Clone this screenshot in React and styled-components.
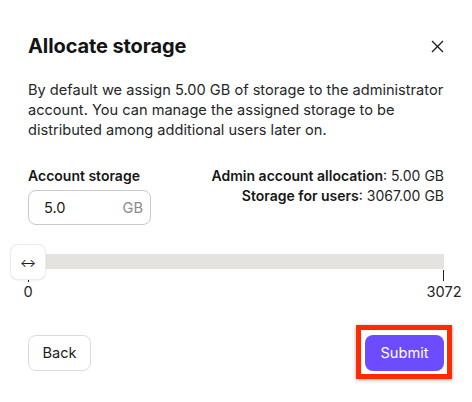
import React from "react";
import styled, { createGlobalStyle } from "styled-components";

const Global = createGlobalStyle`
  html, body { margin: 0; padding: 0; background: #ffffff; }
  body { font-family: Inter, "Noto Sans", "Liberation Sans", sans-serif; color: #1c1c1c; }
  * { box-sizing: border-box; }
`;

const Dialog = styled.div`
  width: 472px;
  height: 402px;
  padding: 32px 28px 0 28px;
  display: flex;
  flex-direction: column;
  background: #fff;
`;

const Header = styled.div`
  display: flex;
  align-items: center;
  justify-content: space-between;
  height: 28px;
`;

const Title = styled.h2`
  margin: 0;
  font-size: 20px;
  font-weight: 700;
  letter-spacing: -0.1px;
  color: #141414;
`;

const CloseButton = styled.button`
  border: 0;
  background: none;
  padding: 0;
  width: 16px;
  height: 16px;
  display: flex;
  align-items: center;
  justify-content: center;
  margin-right: -1px;
  cursor: pointer;
`;

const Description = styled.p`
  margin: 20px 0 0 0;
  font-size: 14.6px;
  line-height: 20px;
  color: #262626;
`;

const StatsRow = styled.div`
  display: flex;
  justify-content: space-between;
  margin-top: 26px;
`;

const Field = styled.div`
  display: flex;
  flex-direction: column;
  gap: 4px;
`;

const Label = styled.div`
  font-size: 14px;
  font-weight: 600;
  line-height: 20px;
  color: #171717;
`;

const InputBox = styled.div`
  width: 123px;
  height: 35px;
  border: 1px solid #c9c9c9;
  border-radius: 8px;
  display: flex;
  align-items: center;
  justify-content: space-between;
  padding: 0 7px 0 15px;
  font-size: 14.6px;
`;

const InputValue = styled.span`
  color: #1c1c1c;
`;

const Unit = styled.span`
  color: #8a8a8a;
`;

const Stats = styled.div`
  display: flex;
  flex-direction: column;
  align-items: flex-end;
  font-size: 14px;
  line-height: 20px;
  color: #262626;
`;

const StatKey = styled.b`
  font-weight: 600;
  color: #171717;
`;

const SliderArea = styled.div`
  margin-top: 20px;
  position: relative;
  height: 60px;
`;

const Track = styled.div`
  position: absolute;
  left: 0;
  right: 0;
  top: 9px;
  height: 15px;
  background: #e5e3df;
`;

const Thumb = styled.div`
  position: absolute;
  left: -17px;
  top: 0;
  width: 34px;
  height: 34px;
  background: #fff;
  border-radius: 7px;
  box-shadow: 0 0 0 1px #ececec, 0 1px 3px rgba(0, 0, 0, 0.12);
  display: flex;
  align-items: center;
  justify-content: center;
  font-size: 12px;
  color: #1a1a1a;
`;

const Tick = styled.div`
  position: absolute;
  top: ${(p) => p.$top}px;
  left: ${(p) => (p.$end ? "auto" : "0")};
  right: ${(p) => (p.$end ? "0" : "auto")};
  width: 1px;
  height: ${(p) => p.$h}px;
  background: #222;
`;

const TickLabel = styled.span`
  position: absolute;
  top: 38px;
  font-size: 14.6px;
  line-height: 18px;
  color: #262626;
  transform: translateX(-50%);
  left: ${(p) => p.$left};
`;

const Footer = styled.div`
  margin-top: 30px;
  display: flex;
  justify-content: space-between;
  align-items: center;
`;

const BackButton = styled.button`
  height: 36px;
  width: 63px;
  border: 1px solid #dcdcdc;
  border-radius: 8px;
  background: #fff;
  font-family: inherit;
  font-size: 14.6px;
  color: #1c1c1c;
  padding: 0;
`;

const Highlight = styled.div`
  position: relative;
  &::after {
    content: "";
    position: absolute;
    left: -9px;
    right: -8px;
    top: -10px;
    bottom: -8px;
    border: 5px solid #ff2a00;
    box-shadow: 0 1px 4px rgba(0, 0, 0, 0.35);
    pointer-events: none;
  }
`;

const SubmitButton = styled.button`
  height: 36px;
  width: 79px;
  border: 0;
  border-radius: 8px;
  background: #6d4cff;
  color: #fff;
  font-family: inherit;
  font-size: 14.6px;
  padding: 0;
  display: block;
`;

export default function App() {
  return (
    <>
      <Global />
      <Dialog>
        <Header>
          <Title>Allocate storage</Title>
          <CloseButton aria-label="Close">
            <svg width="13" height="13" viewBox="0 0 13 13">
              <path d="M1 1L12 12M12 1L1 12" stroke="#1a1a1a" strokeWidth="1.3" fill="none" />
            </svg>
          </CloseButton>
        </Header>
        <Description>
          By default we assign 5.00 GB of storage to the administrator account. You can manage the
          assigned storage to be distributed among additional users later on.
        </Description>
        <StatsRow>
          <Field>
            <Label>Account storage</Label>
            <InputBox>
              <InputValue>5.0</InputValue>
              <Unit>GB</Unit>
            </InputBox>
          </Field>
          <Stats>
            <div>
              <StatKey>Admin account allocation</StatKey>: 5.00 GB
            </div>
            <div>
              <StatKey>Storage for users</StatKey>: 3067.00 GB
            </div>
          </Stats>
        </StatsRow>
        <SliderArea>
          <Track />
          <Tick $top={35} $h={2} />
          <Tick $end $top={25} $h={11} />
          <Thumb>↔</Thumb>
          <TickLabel $left="0px">0</TickLabel>
          <TickLabel $left="100%">3072</TickLabel>
        </SliderArea>
        <Footer>
          <BackButton>Back</BackButton>
          <Highlight>
            <SubmitButton>Submit</SubmitButton>
          </Highlight>
        </Footer>
      </Dialog>
    </>
  );
}
